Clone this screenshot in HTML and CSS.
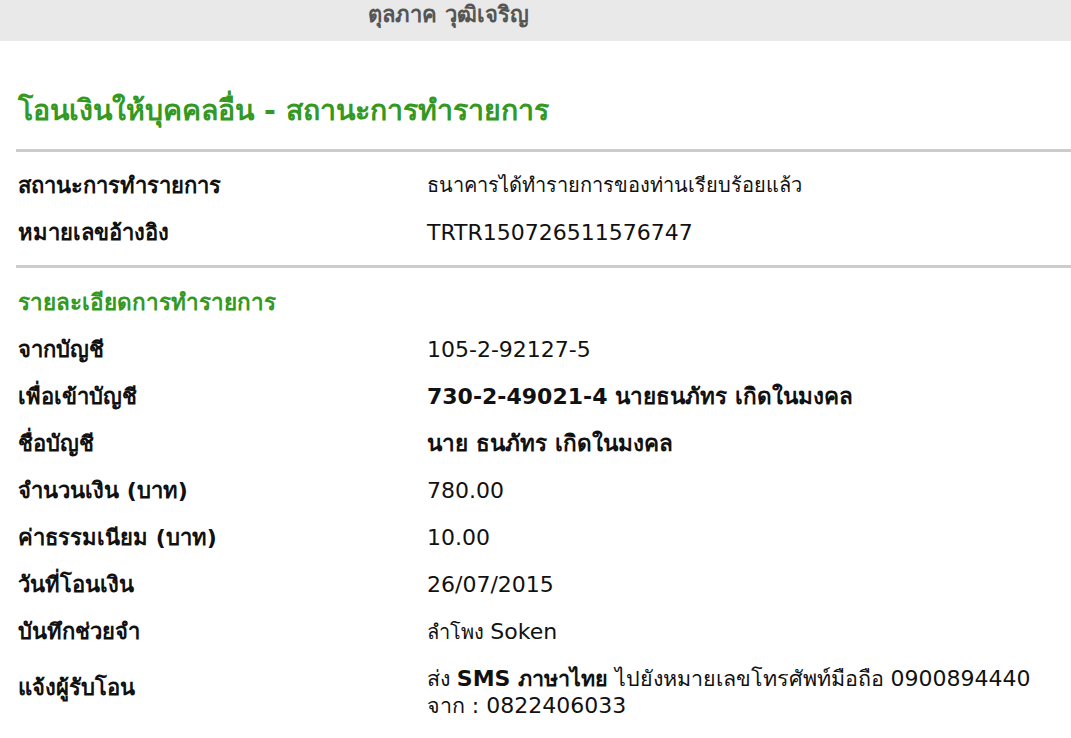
FILE: index.html
```html
<!DOCTYPE html>
<html lang="th">
<head>
<meta charset="utf-8">
<title>โอนเงินให้บุคคลอื่น - สถานะการทำรายการ</title>
<link rel="stylesheet" href="styles.css">
</head>
<body>
<div class="topbar"><span class="user">ตุลภาค วุฒิเจริญ</span></div>
<main class="page">
  <h1 class="title">โอนเงินให้บุคคลอื่น - สถานะการทำรายการ</h1>
  <div class="rule"></div>
  <section class="block block-status">
    <div class="row"><div class="label">สถานะการทำรายการ</div><div class="value">ธนาคารได้ทำรายการของท่านเรียบร้อยแล้ว</div></div>
    <div class="row"><div class="label">หมายเลขอ้างอิง</div><div class="value"><span class="lat">TRTR150726511576747</span></div></div>
  </section>
  <div class="rule"></div>
  <section class="block block-detail">
    <h2 class="subtitle">รายละเอียดการทำรายการ</h2>
    <div class="row"><div class="label">จากบัญชี</div><div class="value"><span class="lat">105-2-92127-5</span></div></div>
    <div class="row"><div class="label">เพื่อเข้าบัญชี</div><div class="value strong"><span class="lat">730-2-49021-4</span> นายธนภัทร เกิดในมงคล</div></div>
    <div class="row"><div class="label">ชื่อบัญชี</div><div class="value strong">นาย ธนภัทร เกิดในมงคล</div></div>
    <div class="row"><div class="label">จำนวนเงิน (บาท)</div><div class="value"><span class="lat">780.00</span></div></div>
    <div class="row"><div class="label">ค่าธรรมเนียม (บาท)</div><div class="value"><span class="lat">10.00</span></div></div>
    <div class="row"><div class="label">วันที่โอนเงิน</div><div class="value"><span class="lat">26/07/2015</span></div></div>
    <div class="row"><div class="label">บันทึกช่วยจำ</div><div class="value">ลำโพง <span class="lat">Soken</span></div></div>
    <div class="row row-multi"><div class="label">แจ้งผู้รับโอน</div><div class="value multi">ส่ง <b><span class="lat">SMS</span> ภาษาไทย</b> ไปยังหมายเลขโทรศัพท์มือถือ <span class="lat">0900894440</span><br>จาก <span class="lat">: 0822406033</span></div></div>
  </section>
</main>
</body>
</html>
```
FILE: styles.css
```css
html, body {
  margin: 0;
  padding: 0;
  background: #ffffff;
}
body {
  font-family: "DejaVu Sans", Tahoma, sans-serif;
  color: #111111;
  font-size: 20px;
}
.topbar {
  height: 41px;
  background: #e9e9e9;
  padding-left: 368px;
  box-sizing: border-box;
}
.user {
  display: block;
  line-height: 30px;
  font-weight: bold;
  font-size: 22px;
  color: #555555;
}
.page {
  padding-left: 16px;
}
.title {
  margin: 46px 0 15px 2px;
  height: 47px;
  line-height: 47px;
  font-size: 28.5px;
  font-weight: bold;
  color: #339922;
}
.rule {
  height: 3px;
  background: #cccccc;
}
.block-status {
  padding: 10px 0 9px;
}
.block-detail {
  padding-top: 11px;
}
.subtitle {
  margin: 0 0 0 2px;
  height: 47px;
  line-height: 47px;
  font-size: 22.5px;
  font-weight: bold;
  color: #339922;
}
.row {
  display: grid;
  grid-template-columns: 411px 1fr;
  align-items: center;
  height: 47px;
}
.row-multi {
  height: 64px;
}
.label {
  padding-left: 2px;
  font-weight: bold;
  font-size: 22px;
  line-height: 27px;
}
.value {
  line-height: 27px;
}
.value.strong {
  font-weight: bold;
  font-size: 22.5px;
}
.lat {
  font-size: 22px;
}
.value.multi {
  font-size: 21.5px;
  padding: 10px 0 0;
}
```
